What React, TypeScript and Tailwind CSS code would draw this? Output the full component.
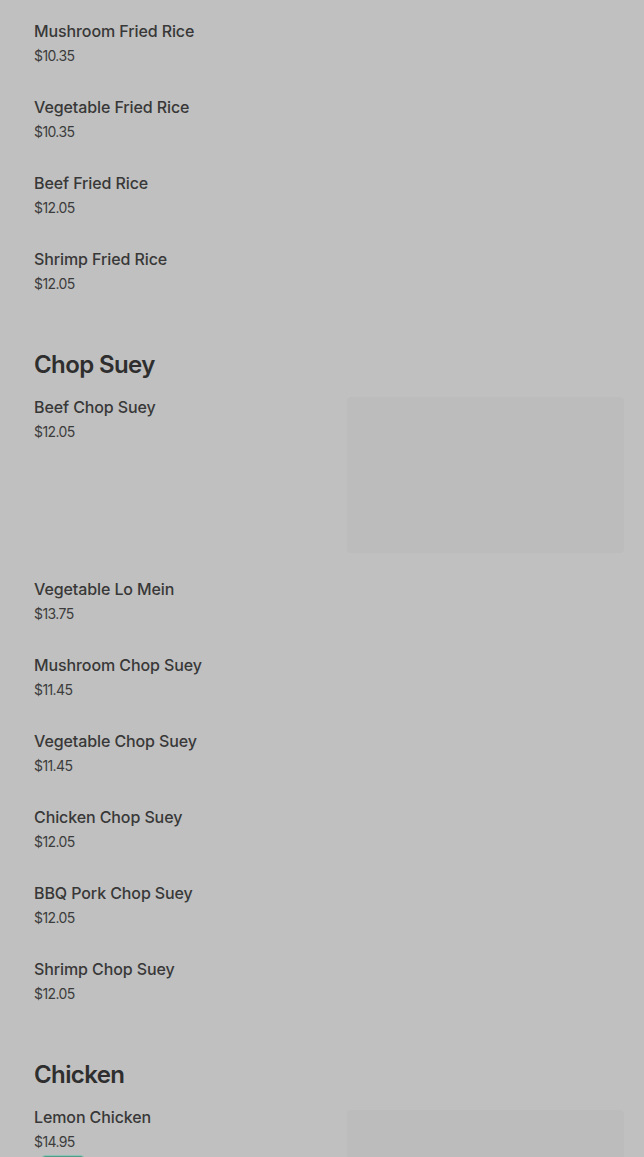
const sections = [
  {
    title: null,
    items: [
      { name: "Mushroom Fried Rice", price: "$10.35" },
      { name: "Vegetable Fried Rice", price: "$10.35" },
      { name: "Beef Fried Rice", price: "$12.05" },
      { name: "Shrimp Fried Rice", price: "$12.05" },
    ],
  },
  {
    title: "Chop Suey",
    items: [
      { name: "Beef Chop Suey", price: "$12.05", image: true },
      { name: "Vegetable Lo Mein", price: "$13.75" },
      { name: "Mushroom Chop Suey", price: "$11.45" },
      { name: "Vegetable Chop Suey", price: "$11.45" },
      { name: "Chicken Chop Suey", price: "$12.05" },
      { name: "BBQ Pork Chop Suey", price: "$12.05" },
      { name: "Shrimp Chop Suey", price: "$12.05" },
    ],
  },
  {
    title: "Chicken",
    items: [{ name: "Lemon Chicken", price: "$14.95", image: true, badge: true }],
  },
];

type Item = { name: string; price: string; image?: boolean; badge?: boolean };

function MenuItem({ item }: { item: Item }) {
  return (
    <div className="flex justify-between">
      <div className="pt-[15px] pb-[14px]">
        <p className="text-[16px] font-medium leading-6 tracking-[-0.1px] text-[#383838]">{item.name}</p>
        <p className="mt-[3px] text-[14px] leading-5 tracking-[-0.6px] text-[#3c3c3c]">{item.price}</p>
        {item.badge && (
          <div className="mt-[3px] ml-[6px] h-6 w-[46px] rounded-md border border-[#8cc3b4] bg-[#4f9c88]" />
        )}
      </div>
      {item.image && (
        <div
          className={
            item.badge
              ? "mt-[20px] h-[156px] w-[277px] shrink-0 rounded-sm bg-[#bcbcbc]"
              : "mt-[17px] mb-[9px] h-[156px] w-[277px] shrink-0 rounded-sm bg-[#bcbcbc]"
          }
        />
      )}
    </div>
  );
}

export default function App() {
  return (
    <main className="h-[1157px] overflow-hidden bg-[#c0c0c0] pl-[34px] pr-5 pt-1 font-['Inter',sans-serif]">
      {sections.map((section, i) => (
        <section key={i}>
          {section.title && (
            <h2 className="mt-[42px] text-[24px] font-semibold leading-[30px] tracking-[-0.6px] text-[#2e2e2e]">
              {section.title}
            </h2>
          )}
          {section.items.map((item) => (
            <MenuItem key={item.name} item={item} />
          ))}
        </section>
      ))}
    </main>
  );
}
